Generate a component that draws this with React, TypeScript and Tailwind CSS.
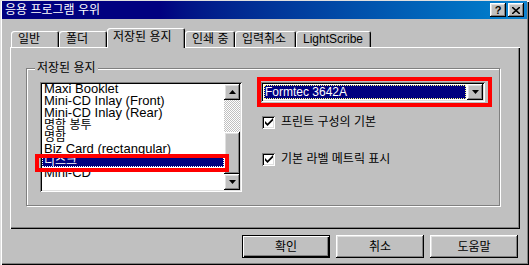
import React from 'react';

const raised =
  'bg-[#c0c0c0] shadow-[inset_-1px_-1px_0_#000,inset_1px_1px_0_#fff,inset_-2px_-2px_0_#808080,inset_2px_2px_0_#dfdfdf]';
const sunken =
  'shadow-[inset_1px_1px_0_#808080,inset_-1px_-1px_0_#fff,inset_2px_2px_0_#000,inset_-2px_-2px_0_#dfdfdf]';

type Tab = { label: string; width: string; selected?: boolean };

const tabs: Tab[] = [
  { label: '일반', width: 'w-[48px]' },
  { label: '폴더', width: 'w-[48px]' },
  { label: '저장된 용지', width: 'w-[78px]', selected: true },
  { label: '인쇄 중', width: 'w-[50px]' },
  { label: '입력취소', width: 'w-[61px]' },
  { label: 'LightScribe', width: 'w-[75px]' },
];

const paperItems = [
  { label: 'Maxi Booklet', size: 'text-[13px]' },
  { label: 'Mini-CD Inlay (Front)', size: 'text-[13px]' },
  { label: 'Mini-CD Inlay (Rear)', size: 'text-[13px]' },
  { label: '명함 봉투', size: 'text-[12px]' },
  { label: '명함', size: 'text-[12px]' },
  { label: 'Biz Card (rectangular)', size: 'text-[13px]' },
  { label: '디스크', size: 'text-[12px]', selected: true },
  { label: 'Mini-CD', size: 'text-[13px]' },
];

const Arrow = ({ up }: { up?: boolean }) => (
  <svg width="7" height="4" viewBox="0 0 7 4">
    <path d={up ? 'M3.5 0 L7 4 L0 4 Z' : 'M0 0 L7 0 L3.5 4 Z'} fill="#000" />
  </svg>
);

const Check = () => (
  <svg width="8" height="8" viewBox="0 0 8 8">
    <path d="M0 3 L2.5 5.5 L8 0 L8 2.5 L2.5 8 L0 5.5 Z" fill="#000" />
  </svg>
);

const CheckRow = ({ label, className }: { label: string; className: string }) => (
  <div className={`flex items-center gap-[6px] ml-[1px] ${className}`}>
    <div className={`w-[13px] h-[13px] bg-white flex items-center justify-center ${sunken}`}>
      <Check />
    </div>
    <span className="text-[12px] leading-[14px]">{label}</span>
  </div>
);

export default function App() {
  return (
    <div className="relative w-[529px] h-[265px] bg-[#c0c0c0] pt-[1px] px-[2px] flex flex-col text-black font-['Liberation_Sans','Noto_Sans_CJK_KR',sans-serif] shadow-[inset_1px_1px_0_#dfdfdf,inset_2px_2px_0_#fff,inset_-1px_-1px_0_#000,inset_-2px_-2px_0_#808080] overflow-hidden">
      {/* TITLE BAR */}
      <div className="h-[18px] flex items-center justify-between pl-[3px] pr-[3px] bg-linear-to-r from-[#000080] from-30% to-[#1084d0]">
        <span className="text-white text-[12px] leading-[14px]">응용 프로그램 우위</span>
        <div className="flex gap-[2px]">
          <div className={`w-[16px] h-[14px] flex items-center justify-center ${raised}`}>
            <span className="text-[11px] leading-[11px] font-bold">?</span>
          </div>
          <div className={`w-[16px] h-[14px] flex items-center justify-center ${raised}`}>
            <svg width="8" height="7" viewBox="0 0 8 7">
              <path d="M0 0 L8 7 M8 0 L0 7" stroke="#000" strokeWidth="1.6" />
            </svg>
          </div>
        </div>
      </div>

      <div className="px-[8px] flex flex-col">
        {/* TABS */}
        <div className="mt-[9px] ml-[1px] h-[19px] flex items-end">
          {tabs.map((t) =>
            t.selected ? (
              <div
                key={t.label}
                className={`${t.width} relative z-10 h-[20px] -mb-[1px] pl-[6px] pb-[3px] flex items-center bg-[#c0c0c0] text-[12px] leading-[14px] rounded-tl-[3px] rounded-tr-[2px] shadow-[inset_1px_1px_0_#fff,inset_-1px_0_0_#000,inset_-2px_0_0_#808080]`}
              >
                {t.label}
              </div>
            ) : (
              <div
                key={t.label}
                className={`${t.width} h-[16px] pl-[7px] flex items-center text-[12px] leading-[14px] rounded-tl-[3px] rounded-tr-[2px] shadow-[inset_1px_1px_0_#fff,inset_-1px_0_0_#000,inset_-2px_0_0_#808080]`}
              >
                {t.label}
              </div>
            ),
          )}
        </div>

        {/* TAB PANEL */}
        <div className="w-[510px] h-[182px] pt-[21px] pl-[16px] shadow-[inset_1px_1px_0_#fff,inset_-1px_-1px_0_#000,inset_-2px_-2px_0_#808080]">
          <div className="relative w-[474px] h-[138px] border border-[#808080] shadow-[inset_1px_1px_0_#fff,1px_1px_0_#fff] pt-[13px] pl-[13px] flex gap-[19px]">
            <span className="absolute left-[8px] -top-[8px] px-[2px] bg-[#c0c0c0] text-[12px] leading-[14px]">
              저장된 용지
            </span>

            {/* LISTBOX */}
            <div className={`w-[202px] h-[110px] bg-white p-[2px] flex ${sunken}`}>
              <div className="flex-1 overflow-hidden">
                <div className="-mt-[1px] flex flex-col">
                  {paperItems.map((item) =>
                    item.selected ? (
                      <div
                        key={item.label}
                        className={`h-[12px] pl-[2px] bg-[#000080] text-white ${item.size} leading-[12px] whitespace-nowrap outline-1 outline-dotted outline-white -outline-offset-1`}
                      >
                        {item.label}
                      </div>
                    ) : (
                      <div key={item.label} className={`h-[12px] pl-[2px] ${item.size} leading-[12px] whitespace-nowrap`}>
                        {item.label}
                      </div>
                    ),
                  )}
                </div>
              </div>
              <div className="w-[16px] flex flex-col">
                <div className={`h-[16px] flex items-center justify-center ${raised}`}>
                  <Arrow up />
                </div>
                <div className="h-[32px] bg-[repeating-conic-gradient(#fff_0%_25%,#c0c0c0_0%_50%)] bg-[length:2px_2px]" />
                <div className={`h-[42px] ${raised}`} />
                <div className={`h-[16px] flex items-center justify-center ${raised}`}>
                  <Arrow />
                </div>
              </div>
            </div>

            {/* RIGHT COLUMN */}
            <div className="flex flex-col">
              <div className={`w-[224px] h-[20px] bg-white p-[2px] flex ${sunken}`}>
                <div className="flex-1 m-[1px] bg-[#000080] text-white text-[12px] leading-[14px] pl-[1px] outline-1 outline-dotted outline-[#ffff80] -outline-offset-1">
                  Formtec 3642A
                </div>
                <div className={`w-[16px] h-[16px] flex items-center justify-center ${raised}`}>
                  <Arrow />
                </div>
              </div>
              <CheckRow label="프린트 구성의 기본" className="mt-[13px]" />
              <CheckRow label="기본 라벨 메트릭 표시" className="mt-[23px]" />
            </div>
          </div>
        </div>

        {/* BUTTONS */}
        <div className="mt-[6px] pr-[1px] flex justify-end gap-[6px]">
          <button className="w-[88px] h-[23px] border border-black bg-[#c0c0c0] text-[12px] leading-[14px] shadow-[inset_1px_1px_0_#fff,inset_-1px_-1px_0_#000,inset_-2px_-2px_0_#808080]">
            확인
          </button>
          <button className={`w-[88px] h-[23px] text-[12px] leading-[14px] ${raised}`}>취소</button>
          <button className={`w-[88px] h-[23px] text-[12px] leading-[14px] ${raised}`}>도움말</button>
        </div>
      </div>

      {/* ANNOTATIONS */}
      <div className="absolute left-[35px] top-[154px] w-[194px] h-[18px] border-[4px] border-[#ff0000] pointer-events-none" />
      <div className="absolute left-[257px] top-[77px] w-[235px] h-[30px] border-[4px] border-[#ff0000] pointer-events-none" />
    </div>
  );
}
